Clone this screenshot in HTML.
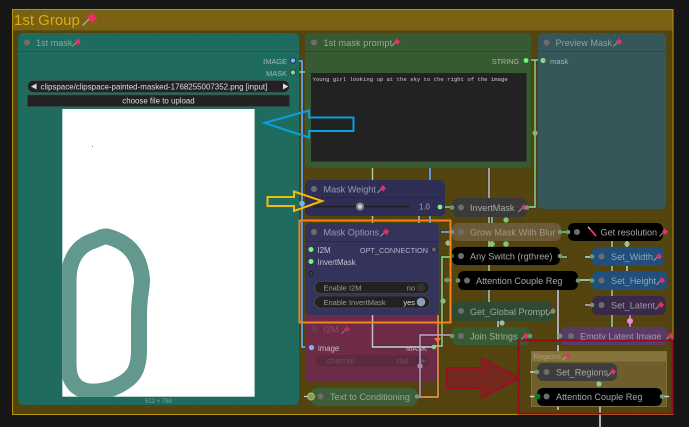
<!DOCTYPE html>
<html><head><meta charset="utf-8"><style>
html,body{margin:0;padding:0;background:#171717;width:689px;height:427px;overflow:hidden}
svg{display:block}
text{font-family:"Liberation Sans",sans-serif;font-size:9px;fill:#a8a8a8}
.t{font-size:9.1px}
.w{fill:none;stroke-width:1.4}
</style></head><body>
<svg width="689" height="427" viewBox="0 0 689 427" xmlns="http://www.w3.org/2000/svg">
<defs>
<pattern id="g" width="10" height="10" patternUnits="userSpaceOnUse"><path d="M10 0H0V10" fill="none" stroke="#000" stroke-opacity=".12" stroke-width=".6"/></pattern>
<clipPath id="img"><rect x="62.3" y="109" width="192.3" height="287.7"/></clipPath>
<filter id="o" filterUnits="userSpaceOnUse" x="0" y="0" width="689" height="427"><feMorphology in="SourceAlpha" operator="dilate" radius=".5" result="d"/><feFlood flood-color="#2a2a2a"/><feComposite in2="d" operator="in" result="b"/><feMerge><feMergeNode in="b"/><feMergeNode in="SourceGraphic"/></feMerge></filter>
<g id="pin"><path d="M.4 8.400L4.200 4.600" stroke="#a9a9a9" stroke-width=".9" fill="none"/><path d="M5.300 .3L9.300 3.900L8 4.600L6.500 7.100L2.900 3.100L5 2Z" fill="#ea2f62"/></g>
</defs>
<rect width="689" height="427" fill="#171717"/>
<rect width="689" height="427" fill="url(#g)"/>

<!-- group -->
<rect x="12.500" y="9.500" width="660.500" height="405" fill="#54440f"/>
<rect x="12.500" y="9.500" width="660.500" height="21" fill="#7a6212"/>
<rect x="12.500" y="9.500" width="660.500" height="405" fill="url(#g)"/>
<rect x="12.500" y="9.500" width="660.500" height="405" fill="none" stroke="#b8940f" stroke-width="1"/>
<text x="14" y="25" style="font-size:15px;fill:#d9ad12">1st Group</text>
<g transform="translate(82,11.500) scale(1.65)"><use href="#pin"/></g>

<!-- wires beneath nodes -->
<g class="w" filter="url(#o)">
<path d="M293 61H302V347H311" stroke="#6db6ff"/>
<path d="M293 72H305" stroke="#8ed08a"/>
<path d="M372.500 168V330" stroke="#a8d0a0"/>
<path d="M430 168V225" stroke="#6db6ff"/>
<path d="M419 216V223" stroke="#a8c8a8"/>
<path d="M489 168V198" stroke="#bcbcbc"/>
<path d="M535 60V207H527" stroke="#8ed08a"/>
<path d="M528 60H542" stroke="#8ed08a"/>
<path d="M439 207H452" stroke="#8ed08a"/>
<path d="M441 232H452" stroke="#6db6ff"/>
<path d="M489 217V247" stroke="#a8c8a8"/><path d="M492 217V247" stroke="#8ed08a"/>
<path d="M489 265V271M489 290V302" stroke="#a8c8a8"/>
<path d="M444 280H452" stroke="#f39a3c"/>
<path d="M561 232H568" stroke="#8ed08a"/>
<path d="M612 241V247M612 265V271M612 290V296M612 315V327" stroke="#a8c8a8"/>
<path d="M627 241V247M627 265V271" stroke="#c8d8c8"/>
<path d="M558 257H567" stroke="#8ed08a"/>
<path d="M585 257H592" stroke="#c8d8c8"/>
<path d="M578 280H592" stroke="#c8d8c8"/>
<path d="M585 305H592" stroke="#f0a0d8"/>
<path d="M558 290V340" stroke="#d0d0d0"/>
<path d="M498 321V327" stroke="#c8c8c8"/>
<path d="M558 345V410" stroke="#c8d8c8"/>
<path d="M600 406V427" stroke="#c8d8c8"/>
<path d="M630 315V327" stroke="#f088e0"/>
</g>

<!-- 1st mask -->
<rect x="18" y="33" width="281" height="372" rx="5" fill="#1f6b5e"/>
<path d="M18 51.500H299" stroke="#1a5a50" stroke-width="1"/>
<circle cx="27" cy="42.500" r="3" fill="#6d6d6d"/>
<text x="36" y="46" class="t" style="fill:#8aa8a2">1st mask</text>
<g transform="translate(72,38)"><use href="#pin"/></g>
<text x="287" y="64" text-anchor="end" style="font-size:7.400px;fill:#a8b8b4">IMAGE</text>
<text x="287" y="76" text-anchor="end" style="font-size:7.400px;fill:#a8b8b4">MASK</text>
<circle cx="293" cy="60.500" r="2.600" fill="#6db6ff" stroke="#123" stroke-width=".7"/>
<circle cx="293" cy="72.500" r="2.600" fill="#8ed08a" stroke="#123" stroke-width=".7"/>
<rect x="27.500" y="80.500" width="262" height="12" rx="6" fill="#222" stroke="#555" stroke-width=".6"/>
<path d="M36.500 83.500L31 86.500L36.500 89.500Z M283 83.500L288.500 86.500L283 89.500Z" fill="#ddd"/>
<text x="40.500" y="89.500" style="font-size:7.950px;fill:#ddd">clipspace/clipspace-painted-masked-1768255007352.png [input]</text>
<rect x="27.500" y="95" width="262" height="11.500" fill="#222" stroke="#444" stroke-width=".5"/>
<text x="158.500" y="103.500" text-anchor="middle" style="font-size:7.900px;fill:#ddd">choose file to upload</text>
<rect x="62.300" y="109" width="192.300" height="287.700" fill="#fff"/>
<circle cx="92.500" cy="146.500" r=".5" fill="#555"/>
<g clip-path="url(#img)"><path d="M68.500 363V280C68.500 262 76 246 94 240.500C99 239 102 236 107 236.500C125 241 140 252 142 280C142 290 139 295 139 315V350C139 372 132 380 112 388.500C100 392 85 394 76 386C71 381 68.500 375 68.500 363Z" fill="none" stroke="#63988e" stroke-width="16" stroke-linejoin="round"/></g>
<text x="158.500" y="403" text-anchor="middle" style="font-size:6px;fill:#7ea69e">512 × 768</text>

<!-- prompt -->
<rect x="305" y="33" width="226" height="135" rx="4" fill="#385a33"/>
<path d="M305 51.500H531" stroke="#2e4c2a"/>
<circle cx="314" cy="42.500" r="3" fill="#6d6d6d"/>
<text x="323.500" y="46" class="t" style="fill:#98a894;letter-spacing:.1px">1st mask prompt</text>
<g transform="translate(391,38)"><use href="#pin"/></g>
<text x="519" y="64" text-anchor="end" style="font-size:7.200px;fill:#a8b8a4">STRING</text>
<circle cx="526" cy="60.500" r="2.400" fill="#7df07a"/>
<rect x="311" y="73" width="215.500" height="88.500" fill="#222"/>
<text x="312.500" y="81" style="font-family:'Liberation Mono',monospace;font-size:5.620px;fill:#ccc">Young girl looking up at the sky to the right of the image</text>

<!-- preview -->
<rect x="538" y="33" width="128" height="176" rx="5" fill="#35575a"/>
<path d="M538 51.500H666" stroke="#2c4a4c"/>
<circle cx="546.500" cy="42.500" r="3" fill="#6d6d6d"/>
<text x="555.500" y="46" class="t" style="fill:#8aa0a0">Preview Mask</text>
<g transform="translate(613,38)"><use href="#pin"/></g>
<circle cx="543" cy="60.500" r="2.600" fill="#8ed08a"/>
<text x="550" y="64" style="font-size:7.600px;fill:#a8b8b8">mask</text>

<!-- I2M -->
<rect x="305" y="310" width="133.500" height="71.500" rx="5" fill="#6e2b48"/>
<circle cx="314.500" cy="329" r="3" fill="#6a3b50"/>
<text x="323.500" y="332.500" class="t" style="fill:#8a4a66">I2M</text>
<g transform="translate(341,325.500)" opacity=".6"><use href="#pin"/></g>
<circle cx="311.500" cy="347.500" r="2.600" fill="#6db6ff"/>
<text x="318" y="351" style="font-size:7.800px;fill:#c8b8c0">image</text>
<rect x="315" y="355" width="115" height="11.500" rx="5.700" fill="#5b2a3e"/>
<text x="327" y="363.500" style="font-size:7.800px;fill:#7a4a5e">channel</text>
<text x="408" y="363.500" text-anchor="end" style="font-size:7.800px;fill:#7a4a5e">red</text>
<path d="M419 358L426 361L419 364Z" fill="#7a4a5e"/>

<!-- wires over I2M -->
<g class="w" filter="url(#o)">
<path d="M372.500 310V347H434" stroke="#c4c4c4"/>
<path d="M458 257H442V346H434" stroke="#8ed08a"/>
<path d="M438 315V397H418" stroke="#f39a3c"/>
<path d="M452 335H420V397" stroke="#c09ac8"/>
</g>
<text x="427" y="351" text-anchor="end" style="font-size:7.400px;fill:#c9b6c0">MASK</text>

<!-- Mask Weight -->
<rect x="305" y="180" width="140" height="36" rx="5" fill="#2f2f55"/>
<path d="M305 197.500H445" stroke="#272748"/>
<circle cx="314" cy="189" r="3" fill="#6d6d6d"/>
<text x="323.500" y="192.500" class="t" style="fill:#9a9ab0">Mask Weight</text>
<g transform="translate(377,184.500)"><use href="#pin"/></g>
<rect x="313" y="205.500" width="96" height="2" fill="#222"/>
<circle cx="360" cy="206.500" r="4" fill="#888"/><circle cx="360" cy="206.500" r="2" fill="#ccc"/>
<text x="419" y="209.500" style="font-size:7.800px;fill:#a8a8a8">1.0</text>
<circle cx="440" cy="207" r="2.400" fill="#7df07a"/>

<!-- Mask Options -->
<rect x="305" y="223" width="134" height="92" rx="5" fill="#33335b"/>
<path d="M305 241.500H439" stroke="#2a2a4c"/>
<circle cx="314" cy="232" r="3" fill="#6d6d6d"/>
<text x="323.500" y="235.500" class="t" style="fill:#9a9ab0">Mask Options</text>
<g transform="translate(380,228)"><use href="#pin"/></g>
<circle cx="311" cy="249.500" r="2.500" fill="#7df07a"/>
<text x="317.500" y="253" style="font-size:7.800px;fill:#c4c4d4">I2M</text>
<text x="428" y="253" text-anchor="end" style="font-size:7.300px;fill:#b4b4c4">OPT_CONNECTION</text>
<circle cx="434" cy="249.500" r="2.500" fill="#666" stroke="#222" stroke-width=".7"/>
<circle cx="311" cy="261.500" r="2.500" fill="#7df07a"/>
<text x="317.500" y="265" style="font-size:7.800px;fill:#c4c4d4">InvertMask</text>
<circle cx="311" cy="273.500" r="2" fill="#2a4a4a" stroke="#111" stroke-width=".7"/>
<rect x="314.500" y="281.500" width="115" height="12" rx="6" fill="#222" stroke="#555" stroke-width=".6"/>
<text x="323.500" y="290.500" style="font-size:7.500px;fill:#999">Enable I2M</text>
<text x="415" y="290.500" text-anchor="end" style="font-size:7.500px;fill:#999">no</text>
<circle cx="421" cy="287.500" r="4.300" fill="#333"/>
<rect x="314.500" y="296" width="115" height="12" rx="6" fill="#222" stroke="#555" stroke-width=".6"/>
<text x="323.500" y="305" style="font-size:7.500px;fill:#999">Enable InvertMask</text>
<text x="415" y="305" text-anchor="end" style="font-size:7.500px;fill:#ddd">yes</text>
<circle cx="421" cy="302" r="4.300" fill="#89a0b8"/>

<!-- collapsed nodes -->
<rect x="452" y="198" width="75" height="19" rx="6" fill="#3a3a3a"/>
<circle cx="461" cy="207.500" r="3" fill="#6d6d6d"/>
<text x="470" y="211" class="t">InvertMask</text><g transform="translate(518,203.500)"><use href="#pin"/></g>

<rect x="452" y="223" width="109" height="18" rx="6" fill="#6d5a38"/>
<circle cx="461" cy="232" r="3" fill="#6d6d6d"/>
<text x="470" y="235.500" class="t" style="fill:#a09a88">Grow Mask With Blur</text>

<rect x="568" y="223" width="95" height="18" rx="6" fill="#000"/>
<circle cx="577" cy="232" r="3" fill="#6d6d6d"/>
<path d="M590 229L596 236" stroke="#e8305f" stroke-width="2"/><path d="M588 227L590 229" stroke="#ccc" stroke-width="1.300"/>
<text x="600.500" y="235.500" class="t">Get resolution</text><g transform="translate(659,228)"><use href="#pin"/></g>

<rect x="452" y="247" width="108" height="18" rx="6" fill="#000"/>
<circle cx="461" cy="256" r="3" fill="#6d6d6d"/>
<text x="470" y="259.500" class="t">Any Switch (rgthree)</text>

<rect x="592" y="247" width="72" height="19" rx="6" fill="#1f4f7a"/>
<circle cx="601.500" cy="256.500" r="3" fill="#6d6d6d"/>
<text x="611" y="260" class="t" style="fill:#94a8b8">Set_Width</text><g transform="translate(653,252.500)"><use href="#pin"/></g>

<rect x="458" y="271" width="120" height="19" rx="6" fill="#000"/>
<circle cx="467" cy="280.500" r="3" fill="#6d6d6d"/>
<text x="476" y="284" class="t">Attention Couple Reg</text>

<rect x="592" y="271" width="75" height="19" rx="6" fill="#1f4f7a"/>
<circle cx="601.500" cy="280.500" r="3" fill="#6d6d6d"/>
<text x="611" y="284" class="t" style="fill:#94a8b8">Set_Height</text><g transform="translate(656,276.500)"><use href="#pin"/></g>

<rect x="592" y="296" width="74" height="19" rx="6" fill="#3a2a4a"/>
<circle cx="601.500" cy="305" r="3" fill="#6d6d6d"/>
<text x="611" y="308.500" class="t" style="fill:#a098a8">Set_Latent</text><g transform="translate(655,301)"><use href="#pin"/></g>

<rect x="452" y="302" width="102" height="19" rx="6" fill="#2f4a33"/>
<circle cx="461" cy="311" r="3" fill="#6d6d6d"/>
<text x="470" y="315" class="t" style="fill:#98a894">Get_Global Prompt</text><g transform="translate(547,307)"><use href="#pin"/></g>

<rect x="452" y="327" width="78" height="18" rx="6" fill="#385a33"/>
<circle cx="461" cy="336" r="3" fill="#6d6d6d"/>
<text x="470" y="339.500" class="t" style="fill:#a0b09c">Join Strings</text><g transform="translate(520,332)"><use href="#pin"/></g>

<rect x="560" y="327" width="108" height="18" rx="6" fill="#5a3a68"/>
<circle cx="571" cy="336" r="3" fill="#6d6d6d"/>
<text x="580" y="339.500" class="t" style="fill:#a898b0">Empty Latent Image</text><g transform="translate(665,332)"><use href="#pin"/></g>

<!-- text to cond -->
<rect x="311" y="388" width="106" height="18" rx="6" fill="#3c5f3a"/>
<circle cx="320.500" cy="396.500" r="3" fill="#6d6d6d"/>
<text x="330" y="400" class="t" style="fill:#98a894">Text to Conditioning</text>
<circle cx="311" cy="396.500" r="3.500" fill="#7a9a70" stroke="#d8c020" stroke-width=".9"/>
<path d="M304 396.500H308" stroke="#ccc" stroke-width="1.200"/>

<!-- Regions group -->
<rect x="531.500" y="351.500" width="135" height="55" fill="#6e5e2c" stroke="#8a7c50" stroke-width=".7"/>
<rect x="531.500" y="351.500" width="135" height="10" fill="#85743c"/>
<text x="533.500" y="359" style="font-size:7.500px;fill:#a89c78">Regions</text>
<g transform="translate(562,352)"><use href="#pin"/></g>
<rect x="537" y="363" width="80" height="18" rx="6" fill="#3d3d3d"/>
<circle cx="546.500" cy="372" r="3" fill="#6d6d6d"/>
<text x="556" y="375.500" class="t">Set_Regions</text><g transform="translate(607,368)"><use href="#pin"/></g>
<rect x="537" y="388" width="125" height="18" rx="6" fill="#000"/>
<circle cx="546.500" cy="396.500" r="3" fill="#6d6d6d"/>
<text x="556" y="400" class="t">Attention Couple Reg</text>
<path d="M530 372H535M530 396.500H535M664 396.500H669" stroke="#ccc" stroke-width="1.400"/>
<circle cx="537" cy="372" r="2.300" fill="#6a9a70"/><circle cx="537.500" cy="396.500" r="3" fill="#0b7a1a"/><circle cx="662" cy="396.500" r="2.300" fill="#6a9a70"/>

<!-- small connector dots -->
<g fill="#6a9a70">
<circle cx="452" cy="207.500" r="2.300"/><circle cx="527" cy="207.500" r="2.300"/>
<circle cx="452" cy="232" r="2.300"/><circle cx="560" cy="232" r="2.300"/><circle cx="568" cy="232" r="2.300"/>
<circle cx="452" cy="256" r="2.300" fill="#0b7a1a"/><circle cx="560" cy="256" r="2.300"/>
<circle cx="458" cy="280.500" r="2.300"/><circle cx="578" cy="280.500" r="2.300"/>
<circle cx="592" cy="256.500" r="2.300"/><circle cx="592" cy="280.500" r="2.300"/><circle cx="592" cy="305" r="2.300"/>
<circle cx="553" cy="311.500" r="2.300"/><circle cx="452" cy="336" r="2.300"/><circle cx="530" cy="336" r="2.300"/>
<circle cx="560" cy="336" r="2.300"/><circle cx="417" cy="396.500" r="2.300"/>
<circle cx="535" cy="133" r="2.600" fill="#7fba7a"/>
<circle cx="506" cy="220" r="2.600" fill="#7fc87a"/><circle cx="492" cy="244" r="2.800" fill="#7fc87a"/><circle cx="506" cy="244" r="2.800" fill="#7fc87a"/>
<circle cx="627" cy="244" r="2.600" fill="#9ac09a"/>
<circle cx="502" cy="323" r="2.600" fill="#9ac09a"/>
<circle cx="599" cy="384" r="2.600" fill="#9ac09a"/>
<circle cx="443" cy="301" r="2.600" fill="#80c080"/>
<circle cx="448" cy="243" r="2.600" fill="#9ac09a"/>
</g>
<circle cx="434" cy="347" r="2.300" fill="#8ed08a"/>
<circle cx="420" cy="366" r="2.600" fill="#a888b8"/>
<circle cx="447" cy="280" r="2.300" fill="#6a9a70"/>
<path d="M434 338H441L437.500 343Z" fill="#f3763c"/>
<circle cx="630" cy="321" r="3" fill="#f088e0"/>
<circle cx="302" cy="203.500" r="2.800" fill="#6db6ff"/>

<!-- annotations -->
<path d="M264.500 123L309 110.500V117.500H353.500V131H309V137.500Z" fill="none" stroke="#0a9fe2" stroke-width="2"/>
<path d="M267.500 197H294V191.500L322 201L294 211V206H267.500Z" fill="none" stroke="#f3bc0c" stroke-width="2"/>
<rect x="299.500" y="220.500" width="151" height="102" fill="none" stroke="#f58220" stroke-width="2"/>
<rect x="518.500" y="340.500" width="154" height="73" fill="none" stroke="#8f0f22" stroke-width="2"/>
<path d="M447 368H482V358L519 378L482 398V388H447Z" fill="#76281f" stroke="#9a0f22" stroke-width="2"/>
</svg>
</body></html>
